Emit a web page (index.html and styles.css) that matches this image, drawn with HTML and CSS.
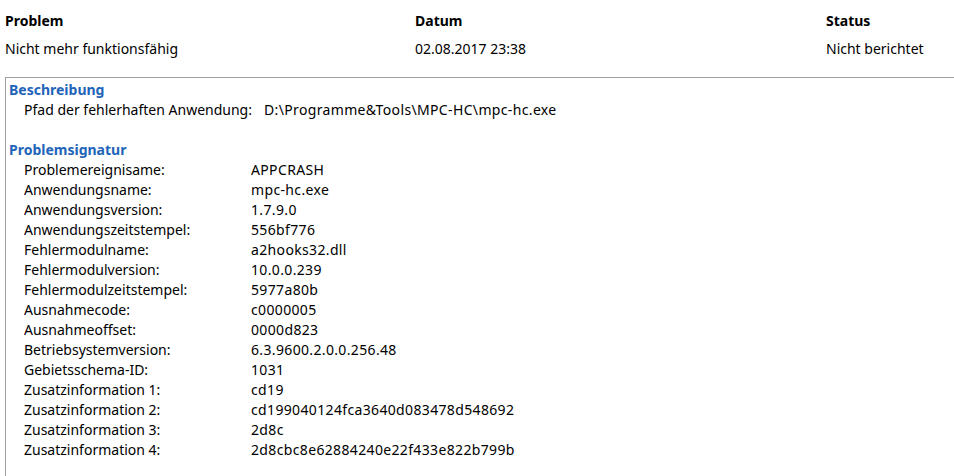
FILE: index.html
```html
<!DOCTYPE html>
<html lang="de">
<head>
  <meta charset="UTF-8" />
  <title>Problemdetails</title>
  <link rel="stylesheet" href="styles.css">
</head>
<body>

  <!-- Report summary -->
  <div class="summary">
    <div class="col col-problem">
      <div class="col-head">Problem</div>
      <div class="col-value">Nicht mehr funktionsfähig</div>
    </div>
    <div class="col col-date">
      <div class="col-head">Datum</div>
      <div class="col-value">02.08.2017 23:38</div>
    </div>
    <div class="col col-status">
      <div class="col-head">Status</div>
      <div class="col-value">Nicht berichtet</div>
    </div>
  </div>

  <!-- Details box -->
  <div class="details">
    <h3 class="section-title">Beschreibung</h3>
    <div class="row row-path">
      <span class="key">Pfad der fehlerhaften Anwendung:</span>
      <span class="val">D:\Programme&amp;Tools\MPC-HC\mpc-hc.exe</span>
    </div>

    <h3 class="section-title section-gap">Problemsignatur</h3>
    <div class="row"><span class="key">Problemereignisame:</span><span class="val">APPCRASH</span></div>
    <div class="row"><span class="key">Anwendungsname:</span><span class="val">mpc-hc.exe</span></div>
    <div class="row"><span class="key">Anwendungsversion:</span><span class="val">1.7.9.0</span></div>
    <div class="row"><span class="key">Anwendungszeitstempel:</span><span class="val">556bf776</span></div>
    <div class="row"><span class="key">Fehlermodulname:</span><span class="val">a2hooks32.dll</span></div>
    <div class="row"><span class="key">Fehlermodulversion:</span><span class="val">10.0.0.239</span></div>
    <div class="row"><span class="key">Fehlermodulzeitstempel:</span><span class="val">5977a80b</span></div>
    <div class="row"><span class="key">Ausnahmecode:</span><span class="val">c0000005</span></div>
    <div class="row"><span class="key">Ausnahmeoffset:</span><span class="val">0000d823</span></div>
    <div class="row"><span class="key">Betriebsystemversion:</span><span class="val">6.3.9600.2.0.0.256.48</span></div>
    <div class="row"><span class="key">Gebietsschema-ID:</span><span class="val">1031</span></div>
    <div class="row"><span class="key">Zusatzinformation 1:</span><span class="val">cd19</span></div>
    <div class="row"><span class="key">Zusatzinformation 2:</span><span class="val">cd199040124fca3640d083478d548692</span></div>
    <div class="row"><span class="key">Zusatzinformation 3:</span><span class="val">2d8c</span></div>
    <div class="row"><span class="key">Zusatzinformation 4:</span><span class="val">2d8cbc8e62884240e22f433e822b799b</span></div>
  </div>

</body>
</html>
```

FILE: styles.css
```css
body {
  margin: 0;
  font-family: "Noto Sans", "Open Sans", sans-serif;
  font-size: 14px;
  color: #000;
  background-color: #fff;
  overflow: hidden;
}
.summary {
  display: flex;
  padding: 11px 0 0 5px;
  height: 77px;
  box-sizing: border-box;
}
.col-problem {
  width: 410px;
}
.col-date {
  width: 411px;
}
.col-head {
  font-weight: bold;
  line-height: 20px;
}
.col-value {
  margin-top: 8px;
  line-height: 20px;
}
.val {
  letter-spacing: 0.35px;
}
.details {
  margin-left: 5px;
  border-top: 1px solid #a0a0a0;
  border-left: 1px solid #a0a0a0;
  padding: 2px 0 0 3px;
  height: 399px;
  box-sizing: border-box;
}
.section-title {
  margin: 0;
  font-size: 14px;
  font-weight: bold;
  color: #1e64b8;
  line-height: 20px;
}
.section-gap {
  margin-top: 20px;
}
.row {
  display: flex;
  line-height: 20px;
  padding-left: 15px;
}
.row .key {
  width: 227px;
}
.row-path .key {
  width: 240px;
}
```
